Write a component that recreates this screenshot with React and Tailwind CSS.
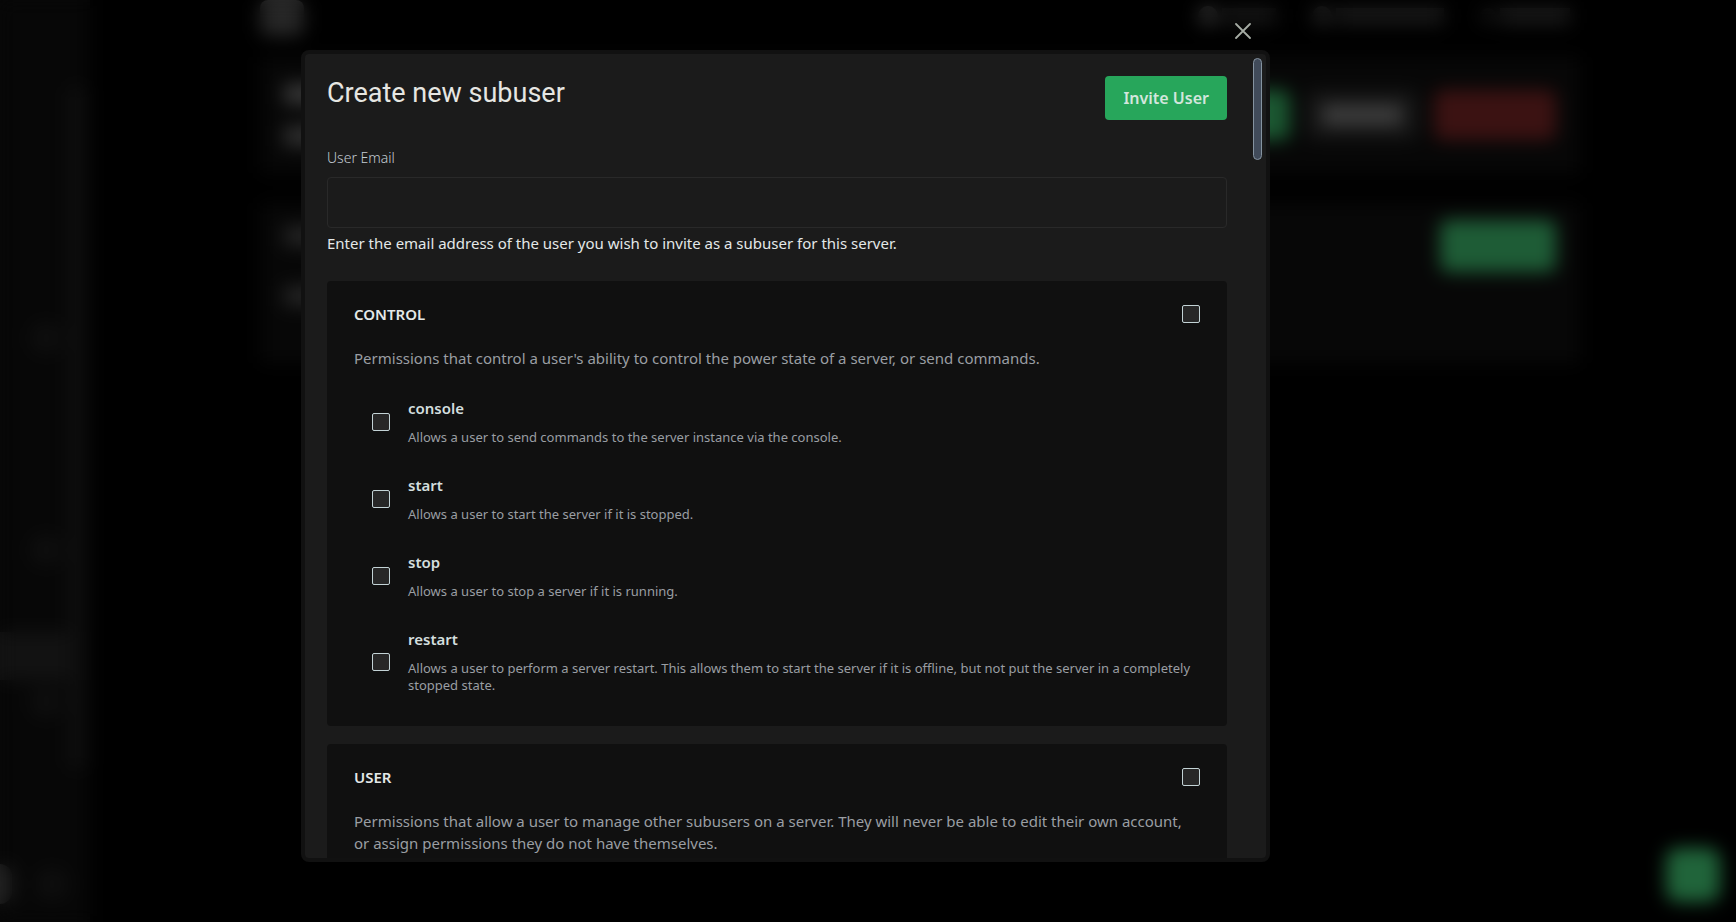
import { useState } from "react";

const groups = [
  {
    name: "control",
    description:
      "Permissions that control a user's ability to control the power state of a server, or send commands.",
    permissions: [
      {
        key: "console",
        text: "Allows a user to send commands to the server instance via the console.",
      },
      {
        key: "start",
        text: "Allows a user to start the server if it is stopped.",
      },
      {
        key: "stop",
        text: "Allows a user to stop a server if it is running.",
      },
      {
        key: "restart",
        text: "Allows a user to perform a server restart. This allows them to start the server if it is offline, but not put the server in a completely stopped state.",
      },
    ],
  },
  {
    name: "user",
    description:
      "Permissions that allow a user to manage other subusers on a server. They will never be able to edit their own account, or assign permissions they do not have themselves.",
    permissions: [],
  },
];

function Checkbox(props) {
  return (
    <input
      type="checkbox"
      className="size-[18px] shrink-0 appearance-none rounded-xs border border-[#c3d3d6] bg-[#272727] checked:bg-[#27a65b]"
      {...props}
    />
  );
}

function PermissionGroup({ group, selected, onChange }) {
  const keys = group.permissions.map((p) => `${group.name}.${p.key}`);
  const all = keys.length > 0 && keys.every((k) => selected.includes(k));

  return (
    <section className="rounded bg-[#101010] px-[27px] pt-[23px] pb-[18px]">
      <label className="flex items-center justify-between">
        <span className="text-[15px] leading-5 font-semibold text-[#e4e8e8] uppercase">
          {group.name}
        </span>
        <Checkbox checked={all} onChange={() => onChange(keys, !all)} />
      </label>
      <p className="mt-[23px] text-[15px] leading-[22px] text-[#9a9ea3]">
        {group.description}
      </p>
      <div className="mt-3.5">
        {group.permissions.map((p) => {
          const key = `${group.name}.${p.key}`;
          const checked = selected.includes(key);
          return (
            <label
              key={key}
              className="flex items-center pt-[15px] pb-3.5 pl-[18px]"
            >
              <Checkbox
                checked={checked}
                onChange={() => onChange([key], !checked)}
              />
              <span className="ml-[18px] flex-1">
                <span className="block text-[15px] leading-5 font-semibold text-[#d3dede]">
                  {p.key}
                </span>
                <span className="mt-[11px] block text-[13px] leading-[17px] text-[#9a9ea3]">
                  {p.text}
                </span>
              </span>
            </label>
          );
        })}
      </div>
    </section>
  );
}

// dimmed server page that sits behind the dialog
function Backdrop() {
  return (
    <div aria-hidden="true" className="flex h-full w-full">
      <div className="flex w-[90px] shrink-0 bg-[#070707]">
        <div className="flex w-[68px] flex-col">
          <div className="mt-[322px] ml-[30px] size-8 rounded-full bg-[#0e0e0e]" />
          <div className="mt-[180px] ml-[30px] size-8 rounded-full bg-[#0e0e0e]" />
          <div className="mt-[66px] h-12 bg-[#121212]" />
          <div className="mt-1.5 ml-[30px] size-8 rounded-full bg-[#0e0e0e]" />
          <div className="mt-auto mb-[18px] flex items-center justify-between">
            <div className="h-10 w-3 rounded-r-full bg-[#222222]" />
            <div className="size-8 rounded-full bg-[#0e0e0e]" />
          </div>
        </div>
        <div className="mt-[85px] mb-[152px] w-[18px] rounded-full bg-[#0e0e0e]" />
      </div>

      <div className="flex-1 pr-[156px] pl-[170px]">
        <div className="flex h-[57px] items-start justify-between">
          <div className="h-9 w-11 rounded-lg bg-[#262626]" />
          <div className="flex gap-9 pt-1.5 pr-2.5">
            <div className="flex items-center gap-1">
              <div className="size-5 rounded-full bg-[#2c2c2c]" />
              <div className="h-4 w-[54px] bg-[#161616]" />
            </div>
            <div className="flex items-center gap-1">
              <div className="size-5 rounded-full bg-[#1f1f1f]" />
              <div className="h-4 w-[108px] bg-[#1a1a1a]" />
            </div>
            <div className="flex items-center gap-1">
              <div className="size-4 rounded-full bg-[#131313]" />
              <div className="h-4 w-[70px] bg-[#1a1a1a]" />
            </div>
          </div>
        </div>
        <div className="flex h-[116px] items-center justify-between rounded bg-[#070707] px-6">
          <div className="flex flex-col gap-[22px]">
            <div className="h-5 w-40 bg-[#383838]" />
            <div className="h-5 w-40 bg-[#303030]" />
          </div>
          <div className="flex items-center gap-4">
            <div className="h-[50px] w-24 rounded-lg bg-[#1b5731]" />
            <div className="flex h-[50px] w-[112px] items-center justify-center rounded-lg bg-[#151515]">
              <div className="h-5 w-20 bg-[#3e3e3e]" />
            </div>
            <div className="h-[50px] w-[122px] rounded-lg bg-[#3b1212]" />
          </div>
        </div>
        <div className="mt-[30px] flex h-[160px] items-start justify-between rounded bg-[#070707] px-6 pt-[17px]">
          <div className="flex flex-col gap-10 pt-1.5">
            <div className="h-5 w-40 bg-[#242424]" />
            <div className="h-5 w-40 bg-[#242424]" />
          </div>
          <div className="h-[52px] w-[116px] rounded-lg bg-[#1e5c36]" />
        </div>
      </div>

      <div className="absolute right-4 bottom-5 size-[54px] rounded-xl bg-[#20643a]" />
    </div>
  );
}

export default function App() {
  const [email, setEmail] = useState("");
  const [selected, setSelected] = useState([]);

  const handleChange = (keys, on) => {
    setSelected((prev) => {
      const rest = prev.filter((k) => !keys.includes(k));
      return on ? [...rest, ...keys] : rest;
    });
  };

  return (
    <div className="relative h-screen overflow-hidden bg-black font-['Noto_Sans','Open_Sans',sans-serif]">
      <Backdrop />

      <div className="absolute inset-0 flex justify-center pt-[50px] pr-[165px] pb-[60px] backdrop-blur-[9px]">
        <div
          role="dialog"
          aria-labelledby="modal-title"
          className="relative w-full max-w-[969px] rounded-lg border-4 border-[#111111] bg-[#1b1b1b]"
        >
          <button
            type="button"
            aria-label="Close"
            className="absolute -top-[35px] right-[11px] flex size-6 items-center justify-center text-[#a6aca4]"
          >
            <svg
              viewBox="0 0 16 16"
              className="size-4"
              fill="none"
              stroke="currentColor"
              strokeWidth="1.8"
              strokeLinecap="round"
            >
              <path d="M1 1l14 14M15 1L1 15" />
            </svg>
          </button>
          <div className="absolute top-1 right-1 h-[102px] w-[9px] rounded-full border border-[#8593a0] bg-[#414b5a]" />

          <form
            onSubmit={(e) => e.preventDefault()}
            className="h-full overflow-y-auto pt-[22px] pr-[39px] pl-[22px] [scrollbar-width:none]"
          >
            <div className="flex items-start justify-between">
              <h2
                id="modal-title"
                className="font-[Roboto,sans-serif] text-[27px] leading-[34px] text-[#e6e6e2]"
              >
                Create new subuser
              </h2>
              <button
                type="submit"
                className="h-11 rounded bg-[#27a65b] px-[18px] text-base font-semibold text-[#d3e6dd]"
              >
                Invite User
              </button>
            </div>

            <label
              htmlFor="email"
              className="mt-7 block text-[14px] leading-5 font-light text-[#c3ccd3]"
            >
              User Email
            </label>
            <input
              id="email"
              type="email"
              value={email}
              onChange={(e) => setEmail(e.target.value)}
              className="mt-[9px] block h-[51px] w-full rounded border border-[#292929] bg-transparent px-3 text-[15px] text-[#e4e8e8] outline-none"
            />
            <p className="mt-1 text-[15px] leading-[22px] text-[#e4e8e8]">
              Enter the email address of the user you wish to invite as a
              subuser for this server.
            </p>

            <div className="mt-[27px] flex flex-col gap-[18px]">
              {groups.map((group) => (
                <PermissionGroup
                  key={group.name}
                  group={group}
                  selected={selected}
                  onChange={handleChange}
                />
              ))}
            </div>
          </form>
        </div>
      </div>
    </div>
  );
}
